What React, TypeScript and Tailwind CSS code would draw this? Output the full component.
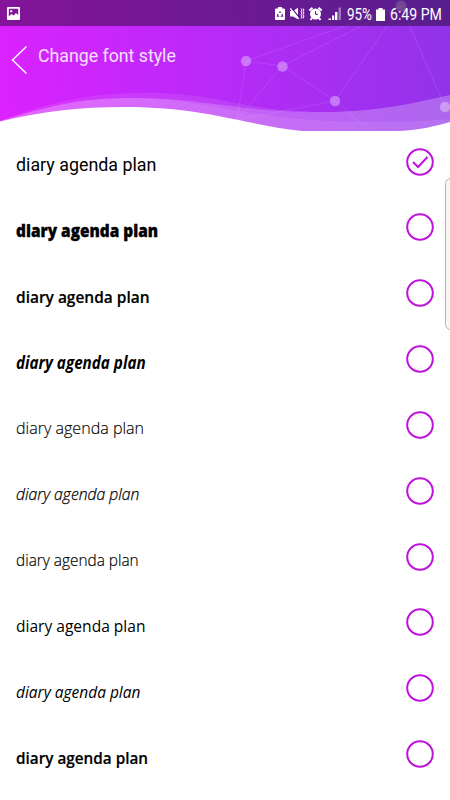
import { useState } from 'react'

interface FontOption {
  id: number
  className: string
}

const SAMPLE_TEXT = 'diary agenda plan'

const fontOptions: FontOption[] = [
  { id: 0, className: "font-['Roboto'] text-[18.5px] font-normal scale-x-[0.965]" },
  { id: 1, className: "font-['Open_Sans'] text-[17px] font-extrabold scale-x-[0.905] [-webkit-text-stroke:0.35px_black]" },
  { id: 2, className: "font-['Open_Sans'] text-[17px] font-semibold scale-x-[0.91] [-webkit-text-stroke:0.2px_black]" },
  { id: 3, className: "font-['Open_Sans'] text-[17px] font-bold italic scale-x-[0.895]" },
  { id: 4, className: "font-['Open_Sans'] text-[17px] font-light scale-x-[0.945] [-webkit-text-stroke:0.15px_black]" },
  { id: 5, className: "font-['Open_Sans'] text-[17px] font-light italic scale-x-[0.925] [-webkit-text-stroke:0.25px_black]" },
  { id: 6, className: "font-['Open_Sans'] text-[17px] font-light scale-x-[0.905] [-webkit-text-stroke:0.2px_black]" },
  { id: 7, className: "font-['Open_Sans'] text-[17px] font-normal scale-x-[0.915]" },
  { id: 8, className: "font-['Open_Sans'] text-[17px] font-normal italic scale-x-[0.91]" },
  { id: 9, className: "font-['Open_Sans'] text-[17px] font-semibold scale-x-[0.9] [-webkit-text-stroke:0.2px_black]" },
]

function HeaderArt() {
  return (
    <svg className="absolute inset-0" width="450" height="132" viewBox="0 0 450 132">
      <defs>
        <linearGradient id="header" gradientUnits="userSpaceOnUse" x1="0" y1="70" x2="450" y2="40">
          <stop offset="0" stopColor="#db22ff" />
          <stop offset="0.5" stopColor="#b62bf7" />
          <stop offset="1" stopColor="#9233ea" />
        </linearGradient>
      </defs>
      <rect width="450" height="132" fill="url(#header)" />
      <g stroke="#fff" strokeOpacity="0.13" strokeWidth="0.8" fill="none">
        <path d="M246 61L282 66L335 101L401 6L445 107M246 61L401 6M282 66L401 6M246 61L237 120L282 66M237 120L335 101L365 127" />
      </g>
      <g fill="#fff">
        <path fillOpacity="0.09" d="M0 121C50 102 90 93 142 93C220 92 245 112 325 112C375 112 415 103 450 95V132H0Z" />
        <path fillOpacity="0.18" d="M0 121C55 104 85 98 132 98C205 98 235 112 325 112C375 112 415 103 450 95V132H0Z" />
        <path fillOpacity="0.08" d="M0 121C55 104 85 98 132 98C205 98 250 122 370 122C405 122 430 121 450 119V132H0Z" />
        <path d="M0 121.5C45 111 80 107 125 107C205 107 245 125 302 131H399C420 130 436 126 450 122V132H0Z" />
      </g>
      <g fill="#fff" fillOpacity="0.34">
        <circle cx="246" cy="61" r="5.2" />
        <circle cx="282.5" cy="66.5" r="5.2" />
        <circle cx="335" cy="101" r="5.2" />
        <circle cx="445" cy="107" r="5.2" />
        <circle cx="401" cy="6" r="5.5" />
      </g>
    </svg>
  )
}

function StatusBar() {
  return (
    <div className="relative flex h-[26px] items-center bg-black/40 pl-[7px] pr-[8px] text-white">
      <svg width="13" height="13" viewBox="0 0 13 13">
        <path
          fill="currentColor"
          fillRule="evenodd"
          d="M1 0H12Q13 0 13 1V12Q13 13 12 13H1Q0 13 0 12V1Q0 0 1 0ZM1.8 1.8V9.5L4.5 7L6.5 8.5L9 6L11.2 8V1.8ZM3.2 3.2H5.2V5.2H3.2Z"
        />
      </svg>
      <div className="ml-auto flex items-center">
        <svg className="mt-[1px]" width="67" height="14" viewBox="0 0 67 14" fill="currentColor">
          {/* battery saver */}
          <path fillRule="evenodd" d="M3 0H7V1.5H9Q10 1.5 10 2.5V12Q10 13 9 13H1Q0 13 0 12V2.5Q0 1.5 1 1.5H3ZM5 4L3.3 6H4.3L5 5L5.8 6H6.8ZM2.4 7L1.7 9.7H4.3V8.7H3.1L3.6 7ZM7.6 7L8.3 9.7H5.6V8.7H6.9L6.4 7Z" />
          {/* muted, vibrating */}
          <path d="M15 4H18L23 0.8V12.2L18 9.5H15Z" />
          <path d="M16.5 1L25.5 12" stroke="#5f198c" strokeWidth="1.2" />
          <path d="M15.3 1.3L23.8 12" fill="none" stroke="currentColor" strokeWidth="1.2" />
          <path d="M26 1.5L27 3L26 4.5L27 6L26 7.5L27 9L26 11.5M28 1.5L29 3L28 4.5L29 6L28 7.5L29 9L28 11.5" fill="none" stroke="currentColor" strokeWidth="1" />
          {/* alarm */}
          <circle cx="40.5" cy="7" r="5.5" />
          <path d="M34.3 3.5L37.5 0.8M43.5 0.8L46.7 3.5M37 11L35.5 13M44 11L45.5 13" stroke="currentColor" strokeWidth="2" />
          <path d="M40.5 4V7.3H43" fill="none" stroke="#5f198c" strokeWidth="1" />
          {/* signal */}
          <path d="M53.5 13V11.5H56V13ZM57 13V8.5H59.2V13ZM60 13V5H62.4V13Z" />
          <path fillOpacity="0.4" d="M63.5 13V0.5H66V13Z" />
        </svg>
        <span className="ml-[5px] w-[26px] font-['Roboto'] text-[16px] leading-[26px]">
          <span className="inline-block origin-left scale-x-[0.84] pt-[3px]">95%</span>
        </span>
        <svg className="ml-[3px] mt-[2px]" width="9" height="13" viewBox="0 0 9 13">
          <path fill="currentColor" d="M2.5 0H6.5V1.5H9V13H0V1.5H2.5Z" />
        </svg>
        <span className="ml-[5px] w-[52px] font-['Roboto'] text-[16px] leading-[26px]">
          <span className="inline-block origin-left scale-x-[0.88] whitespace-nowrap pt-[3px]">6:49 PM</span>
        </span>
      </div>
    </div>
  )
}

export default function App() {
  const [selected, setSelected] = useState(0)

  return (
    <div className="relative h-[800px] w-[450px] overflow-hidden bg-white text-black">
      <header className="relative h-[132px]">
        <HeaderArt />
        <StatusBar />
        <div className="relative flex items-start pl-[11px] pt-[19px] text-white">
          <button aria-label="Back">
            <svg width="17" height="30" viewBox="0 0 17 30" fill="none" stroke="currentColor" strokeWidth="1.4">
              <path d="M15.5 1.5L1.5 15L15.5 28.5" />
            </svg>
          </button>
          <h1 className="-mt-px ml-[10px] origin-left scale-x-[0.985] font-['Roboto'] text-[18px] leading-[24px] text-white/85">
            Change font style
          </h1>
        </div>
      </header>

      <ul className="pt-[0.2px]">
        {fontOptions.map((option) => (
          <li key={option.id} className="h-[65.83px]">
            <button
              onClick={() => setSelected(option.id)}
              className="flex h-full w-full items-center justify-between pl-4 pr-4"
            >
              <span className={`origin-left whitespace-nowrap leading-[24px] ${option.className}`}>{SAMPLE_TEXT}</span>
              <svg className="mb-[7px]" width="28" height="28" viewBox="0 0 28 28" fill="none" stroke="#bf12dc" strokeWidth="2">
                <circle cx="14" cy="14" r="12.8" />
                {selected === option.id && <path d="M7 14L12 19L21.5 9" />}
              </svg>
            </button>
          </li>
        ))}
      </ul>

      {/* edge panel handle */}
      <div className="absolute -right-[6px] top-[178px] h-[152px] w-[11px] rounded-[6px] border border-[#b5b5b5] bg-[#f7f7f7]" />
    </div>
  )
}
